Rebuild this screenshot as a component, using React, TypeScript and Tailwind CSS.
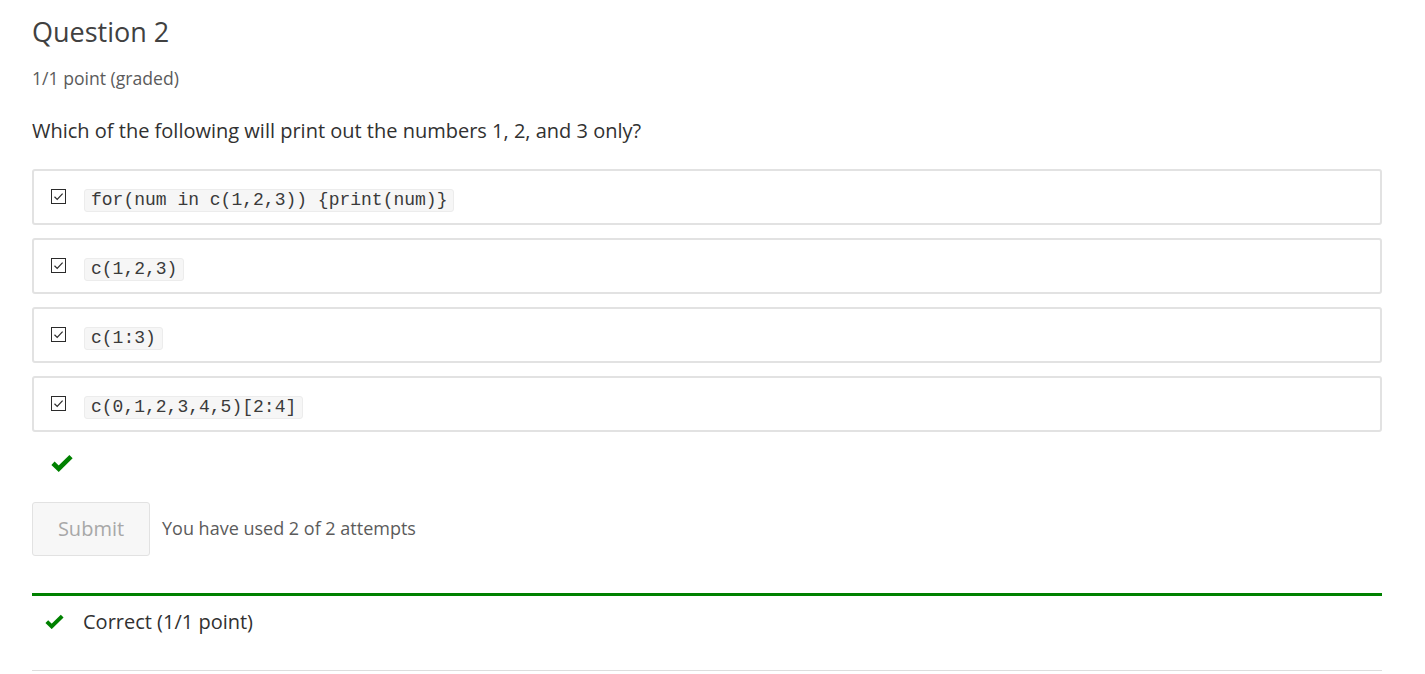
import React from "react";

const options = [
  "for(num in c(1,2,3)) {print(num)}",
  "c(1,2,3)",
  "c(1:3)",
  "c(0,1,2,3,4,5)[2:4]",
];

function CheckMark({ className }: { className?: string }) {
  return (
    <svg viewBox="0 0 20 16" className={className} aria-hidden="true">
      <path d="M1.8 8.2 L7 13.2 L18.2 2.2" fill="none" stroke="#008100" strokeWidth="4.2" strokeLinejoin="miter" />
    </svg>
  );
}

function CheckedBox() {
  return (
    <span className="flex h-[15px] w-[15px] shrink-0 items-center justify-center border border-[#2b2b2b] bg-white">
      <svg viewBox="0 0 13 13" className="h-[13px] w-[13px]" aria-hidden="true">
        <path d="M2.5 6.8 L5.2 9.4 L10.6 3.6" fill="none" stroke="#2b2b2b" strokeWidth="1.2" />
      </svg>
    </span>
  );
}

export default function App() {
  return (
    <div className="min-h-screen bg-white font-['Open_Sans',sans-serif]">
      <div className="ml-[32px] w-[1350px] pt-[14px]">
        <h3 className="text-[27px] leading-[36px] text-[#414141]">Question 2</h3>
        <div className="mt-[16px] text-[17.6px] leading-[24px] text-[#5b5b5b]">1/1 point (graded)</div>

        <p className="mt-[27px] text-[20px] leading-[28px] text-[#313131]">
          Which of the following will print out the numbers 1, 2, and 3 only?
        </p>

        <div className="mt-[24px] flex flex-col gap-[13.5px]">
          {options.map((o) => (
            <label key={o} className="flex h-[55.5px] items-center rounded-[3px] border-2 border-[#e2e2e2] bg-white pl-[17px]">
              <CheckedBox />
              <code className="ml-[18px] mt-[8px] rounded-[3px] border border-[#ececec] bg-[#f6f6f6] px-[6px] font-['Liberation_Mono',monospace] text-[18px] leading-[21px] text-[#3a3a3a]">
                {o}
              </code>
            </label>
          ))}
        </div>

        <div className="mt-[22px] pl-[19px]">
          <CheckMark className="h-[18px] w-[22px]" />
        </div>

        <div className="mt-[30px] flex items-center">
          <button className="h-[54px] w-[118px] rounded-[3px] border border-[#e2e2e2] bg-[#f7f7f7] text-[20px] text-[#a8a8a8]">
            Submit
          </button>
          <span className="ml-[12px] text-[18px] text-[#5b5b5b]">You have used 2 of 2 attempts</span>
        </div>

        <div className="mt-[37px] border-t-[3px] border-[#008100]">
          <div className="flex h-[52px] items-center pl-[13px]">
            <CheckMark className="h-[15px] w-[19px]" />
            <span className="ml-[19px] text-[20px] text-[#313131]">Correct (1/1 point)</span>
          </div>
        </div>
        <div className="mt-[22px] border-t border-[#dddddd]" />
      </div>
    </div>
  );
}
